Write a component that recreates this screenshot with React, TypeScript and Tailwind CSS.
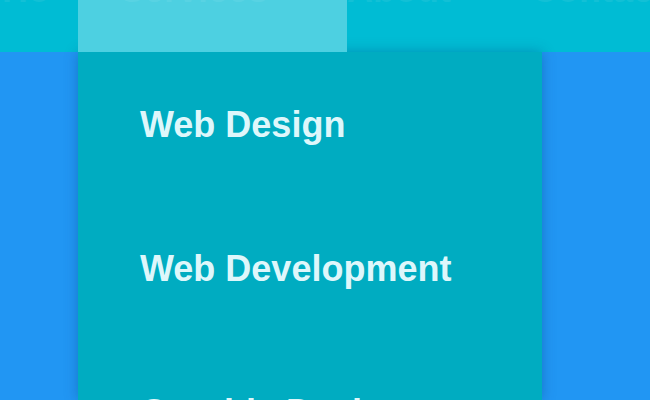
const services = ["Web Design", "Web Development", "Graphic Design"];

const App = () => {
  return (
    <div
      className="h-[400px] w-[650px] overflow-hidden bg-[#2196f3]"
      style={{ fontFamily: '"Liberation Sans", Arial, sans-serif' }}
    >
      <header className="flex h-[52px] bg-[#00bcd4] text-[36px] font-bold leading-[40px] text-[#12c0d6]">
        <div className="w-[78px] overflow-hidden">
          <span className="-mt-[30px] block pl-[2px]">Ho</span>
        </div>
        <div className="w-[269px] overflow-hidden bg-[#4dd0e1] text-[#58d3e3]">
          <span className="-mt-[30px] block pl-[42px]">Services</span>
        </div>
        <div className="flex flex-1 gap-[80px] overflow-hidden">
          <span className="-mt-[30px] block">About</span>
          <span className="-mt-[30px] block">Contact</span>
        </div>
      </header>

      <div className="ml-[78px] h-[348px] w-[464px] bg-[#00acc1] pt-[1px] shadow-[0_0_12px_rgba(0,60,120,0.35)]">
        {services.map((s) => (
          <div
            key={s}
            className="flex h-[144px] items-center pl-[62px] text-[36px] font-bold leading-[40px] text-[#def7fb]"
          >
            {s}
          </div>
        ))}
      </div>
    </div>
  );
};

export default App;
